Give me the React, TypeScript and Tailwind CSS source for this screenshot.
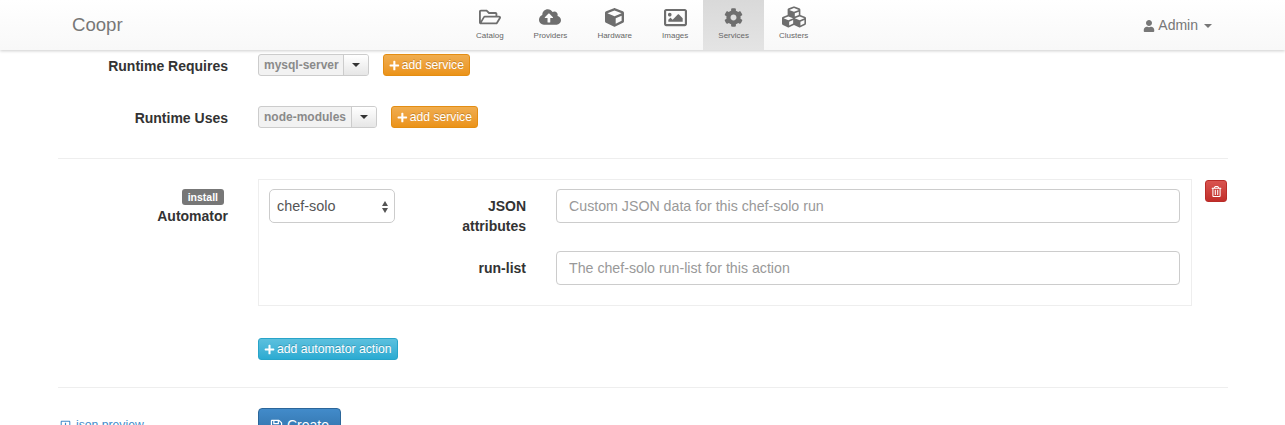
import { FaRegFolderOpen, FaCloudUploadAlt, FaCube, FaRegImage, FaCog, FaCubes, FaUser, FaPlus, FaRegTrashAlt, FaRegSave, FaRegPlusSquare } from "react-icons/fa";
import type { ReactNode } from "react";

const navItems = [
  { label: "Catalog", icon: <FaRegFolderOpen size={22} /> },
  { label: "Providers", icon: <FaCloudUploadAlt size={22} /> },
  { label: "Hardware", icon: <FaCube size={19} /> },
  { label: "Images", icon: <FaRegImage size={23} /> },
  { label: "Services", icon: <FaCog size={19} />, active: true },
  { label: "Clusters", icon: <FaCubes size={24} /> },
];

const Navbar = () => (
  <div className="relative z-10 flex h-[50px] items-stretch bg-gradient-to-b from-white to-[#f8f8f8] pl-[72px] pr-[73px] shadow-[0_1px_3px_rgba(0,0,0,0.2)]">
    <div className="w-[389px] pt-[13px] text-[18.6px] leading-[24px] text-[#777]">Coopr</div>
    <div className="flex">
      {navItems.map((item) => (
        <div
          key={item.label}
          className={`flex flex-col items-center px-[15px] ${item.active ? "bg-gradient-to-b from-[#d9d9d9] to-[#e4e4e4]" : ""}`}
        >
          <div className="flex h-[26px] items-center pt-[8px] text-[#6e6e6e]">{item.icon}</div>
          <div className="mt-[4px] text-[8px] leading-[12px] text-[#666]">{item.label}</div>
        </div>
      ))}
    </div>
    <div className="ml-auto flex items-center gap-[3px] pt-[1px] text-[14px] text-[#777]">
      <FaUser size={12} />
      <span>Admin</span>
      <span className="ml-[3px] h-0 w-0 border-x-4 border-t-4 border-x-transparent border-t-[#777]" />
    </div>
  </div>
);

const Label = ({ children }: { children: ReactNode }) => (
  <div className="w-[170px] shrink-0 pt-[2px] text-right text-[14px] font-bold leading-[20px] text-[#333]">{children}</div>
);

const AddButton = ({ children, className }: { children: ReactNode; className: string }) => (
  <button className={`flex h-[22px] items-center gap-[2px] whitespace-nowrap rounded-[3px] border px-[5px] text-[12.2px] font-normal text-white [text-shadow:0_-1px_0_rgba(0,0,0,0.2)] ${className}`}>
    <FaPlus size={11} />
    {children}
  </button>
);

const ServiceRow = ({ label, value, valueWidth, gap }: { label: string; value: string; valueWidth: string; gap: string }) => (
  <div className={`flex items-center gap-[30px] ${gap}`}>
    <Label>{label}</Label>
    <div className="flex items-center gap-[14px]">
      <div className="flex h-[22px] overflow-hidden rounded-[3px] border border-[#ccc] bg-[#f2f2f2] text-[12px] font-bold text-[#8a8a8a]">
        <span className={`flex items-center whitespace-nowrap pl-[5px] ${valueWidth}`}>{value}</span>
        <span className="flex w-[25px] items-center justify-center border-l border-[#ccc] bg-gradient-to-b from-white to-[#e6e6e6]">
          <span className="h-0 w-0 border-x-4 border-t-4 border-x-transparent border-t-[#333]" />
        </span>
      </div>
      <AddButton className="w-[87px] border-[#e38d13] bg-gradient-to-b from-[#f0ad4e] to-[#eb9316]">add service</AddButton>
    </div>
  </div>
);

const ActionField = ({ label, placeholder, className }: { label: ReactNode; placeholder: string; className: string }) => (
  <div className={`flex ${className}`}>
    <div className="w-[117px] shrink-0 pt-[7px] text-right text-[14px] font-bold leading-[20px] text-[#333]">{label}</div>
    <input
      readOnly
      placeholder={placeholder}
      className="ml-[30px] h-[34px] w-[624px] rounded-[4px] border border-[#ccc] px-[12px] text-[14.2px] text-[#555] placeholder:text-[#999]"
    />
  </div>
);

export default function App() {
  return (
    <div className="h-screen overflow-hidden bg-white font-['Liberation_Sans',Arial,sans-serif]">
      <Navbar />
      <div className="ml-[58px] w-[1170px] pt-[4px]">
        <ServiceRow label="Runtime Requires" value="mysql-server" valueWidth="w-[84px]" gap="" />
        <ServiceRow label="Runtime Uses" value="node-modules" valueWidth="w-[92px]" gap="mt-[30px]" />
        <div className="mt-[30px] border-t border-[#eee]" />

        <div className="mt-[20px] flex">
          <div className="flex w-[170px] shrink-0 flex-col items-end pt-[10px]">
            <span className="mr-[4px] h-[16px] rounded-[3px] bg-[#777] px-[6px] text-[10.5px] font-bold leading-[16px] text-white">install</span>
            <div className="mt-[1px] text-[14px] font-bold leading-[20px] text-[#333]">Automator</div>
          </div>
          <div className="ml-[30px] flex h-[127px] w-[934px] border border-[#eee] pl-[10px] pt-[9px]">
            <div className="flex h-[34px] w-[126px] items-center justify-between rounded-[5px] border border-[#ccc] pl-[7px] pr-[6px] pt-[1px] text-[14.4px] text-[#555]">
              chef-solo
              <span className="flex flex-col gap-[2px]">
                <span className="h-0 w-0 border-x-[3.5px] border-b-[5px] border-x-transparent border-b-[#555]" />
                <span className="h-0 w-0 border-x-[3.5px] border-t-[5px] border-x-transparent border-t-[#555]" />
              </span>
            </div>
            <div className="ml-[14px]">
              <ActionField label={<>JSON<br />attributes</>} placeholder="Custom JSON data for this chef-solo run" className="h-[62px]" />
              <ActionField label="run-list" placeholder="The chef-solo run-list for this action" className="" />
            </div>
          </div>
          <button className="ml-[13px] mt-[1px] flex h-[22px] w-[22px] items-center justify-center rounded-[3px] border border-[#b92c28] bg-gradient-to-b from-[#d9534f] to-[#c12e2a] text-white">
            <FaRegTrashAlt size={11} />
          </button>
        </div>

        <div className="ml-[200px] mt-[32px]">
          <AddButton className="w-[140px] border-[#28a4c9] bg-gradient-to-b from-[#5bc0de] to-[#2aabd2]">add automator action</AddButton>
        </div>
        <div className="mt-[27px] border-t border-[#eee]" />

        <div className="mt-[20px] flex">
          <div className="flex h-[36px] w-[200px] shrink-0 items-start gap-[5px] pl-[2px] pt-[7px] text-[12.2px] leading-[20px] text-[#428bca]">
            <FaRegPlusSquare size={11} className="mt-[5px]" />
            json preview
          </div>
          <button className="flex h-[34px] w-[83px] items-center justify-center gap-[4px] rounded-[4px] border border-[#2b669a] bg-gradient-to-b from-[#428bca] to-[#2d6ca2] text-[14px] text-white">
            <FaRegSave size={13} />
            Create
          </button>
        </div>
      </div>
    </div>
  );
}
